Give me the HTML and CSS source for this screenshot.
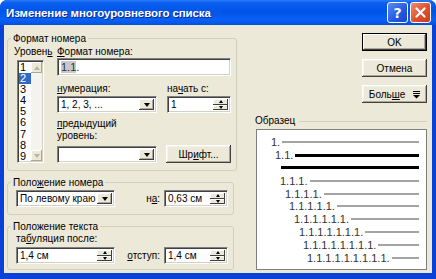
FILE: index.html
```html
<!DOCTYPE html>
<html lang="ru">
<head>
    <meta charset="UTF-8">
    <title>Изменение многоуровневого списка</title>
    <link rel="stylesheet" href="styles.css">
</head>
<body>

<div class="window">
    <!-- Заголовок окна -->
    <div class="titlebar">
        <span class="title">Изменение многоуровневого списка</span>
        <div class="caption-buttons">
            <span class="cap-btn help">?</span>
            <span class="cap-btn close">
                <svg width="11" height="11" viewBox="0 0 11 11"><path d="M1.5 1.5 L9.5 9.5 M9.5 1.5 L1.5 9.5" stroke="#fff" stroke-width="2.2" stroke-linecap="round"/></svg>
            </span>
        </div>
    </div>

    <div class="client">
        <div class="left">
            <fieldset class="group g-format">
                <legend>Формат номера</legend>
                <div class="format-row">
                    <div class="level-col">
                        <div class="lbl">Уровен<u>ь</u></div>
                        <div class="listbox">
                            <ul class="items">
                                <li>1</li>
                                <li class="sel">2</li>
                                <li>3</li>
                                <li>4</li>
                                <li>5</li>
                                <li>6</li>
                                <li>7</li>
                                <li>8</li>
                                <li>9</li>
                            </ul>
                            <div class="vscroll">
                                <span class="sb-btn"><i class="tri up dim"></i></span>
                                <span class="sb-btn"><i class="tri down dim"></i></span>
                            </div>
                        </div>
                    </div>
                    <div class="fmt-col">
                        <div class="lbl"><u>Ф</u>ормат номера:</div>
                        <div class="field fmt-input"><span class="shade">1.1</span>.</div>
                        <div class="pair">
                            <div class="cell">
                                <div class="lbl"><u>н</u>умерация:</div>
                                <div class="field combo w100">1, 2, 3, ...<span class="drop"><i class="tri down"></i></span></div>
                            </div>
                            <div class="cell">
                                <div class="lbl">на<u>ч</u>ать с:</div>
                                <div class="field spin w64">1<span class="spin-btns"><span class="sb"><i class="tri up sm"></i></span><span class="sb"><i class="tri down sm"></i></span></span></div>
                            </div>
                        </div>
                        <div class="pair prev-row">
                            <div class="cell">
                                <div class="lbl two"><u>п</u>редыдущий<br>уровень:</div>
                                <div class="field combo w100"><span class="drop"><i class="tri down"></i></span></div>
                            </div>
                            <button class="btn font-btn">Шр<u>и</u>фт...</button>
                        </div>
                    </div>
                </div>
            </fieldset>

            <fieldset class="group g-number">
                <legend>Поло<u>ж</u>ение номера</legend>
                <div class="row">
                    <div class="field combo w99">По левому краю<span class="drop"><i class="tri down"></i></span></div>
                    <span class="lbl inline na">н<u>а</u>:</span>
                    <div class="field spin w64">0,63 см<span class="spin-btns"><span class="sb"><i class="tri up sm"></i></span><span class="sb"><i class="tri down sm"></i></span></span></div>
                </div>
            </fieldset>

            <fieldset class="group g-text">
                <legend>Положение текста</legend>
                <div class="lbl tab-lbl">та<u>б</u>уляция после:</div>
                <div class="row">
                    <div class="field spin w99">1,4 см<span class="spin-btns"><span class="sb"><i class="tri up sm"></i></span><span class="sb"><i class="tri down sm"></i></span></span></div>
                    <span class="lbl inline"><u>о</u>тступ:</span>
                    <div class="field spin w64">1,4 см<span class="spin-btns"><span class="sb"><i class="tri up sm"></i></span><span class="sb"><i class="tri down sm"></i></span></span></div>
                </div>
            </fieldset>
        </div>

        <div class="right">
            <button class="btn default">OK</button>
            <button class="btn">Отмена</button>
            <button class="btn more-btn">Боль<u>ш</u>е
                <svg class="more" width="7" height="8" viewBox="0 0 7 8"><path d="M0 0.5 H7 M0 2.5 H7" stroke="#000" stroke-width="1"/><path d="M0 4 H7 L3.5 7.5 Z" fill="#000"/></svg>
            </button>

            <div class="sample-head"><span>Образец</span></div>
            <div class="sample">
                <div class="s-row" style="padding-left: 14px"><span>1.</span><i class="s-line"></i></div>
                <div class="s-row" style="padding-left: 18px"><span>1.1.</span><i class="s-line dark"></i></div>
                <div class="s-row" style="padding-left: 24px"><i class="s-line dark"></i></div>
                <div class="s-row" style="padding-left: 23px"><span>1.1.1.</span><i class="s-line"></i></div>
                <div class="s-row" style="padding-left: 28px"><span>1.1.1.1.</span><i class="s-line"></i></div>
                <div class="s-row" style="padding-left: 32px"><span>1.1.1.1.1.</span><i class="s-line"></i></div>
                <div class="s-row" style="padding-left: 37px"><span>1.1.1.1.1.1.</span><i class="s-line"></i></div>
                <div class="s-row" style="padding-left: 42px"><span>1.1.1.1.1.1.1.</span><i class="s-line"></i></div>
                <div class="s-row" style="padding-left: 46px"><span>1.1.1.1.1.1.1.1.</span><i class="s-line"></i></div>
                <div class="s-row" style="padding-left: 50px"><span>1.1.1.1.1.1.1.1.1.</span><i class="s-line"></i></div>
            </div>
        </div>
    </div>
</div>

</body>
</html>
```

FILE: styles.css
```css
/* Общие настройки */
body {
    margin: 0;
    background: #fff;
    font-family: 'Liberation Sans', Arial, sans-serif;
    font-size: 10px;
    color: #000;
}

u {
    text-decoration: underline;
    text-underline-offset: 1px;
}

/* Окно диалога */
.window {
    width: 436px;
    height: 279px;
    display: flex;
    flex-direction: column;
    background: #0842d8;
    border-radius: 7px 7px 0 0;
    overflow: hidden;
}

.titlebar {
    height: 25px;
    display: flex;
    align-items: center;
    justify-content: space-between;
    padding: 0 5px 0 6px;
    background: linear-gradient(#2a7cf8 0%, #0a5ef0 12%, #0055e8 45%, #0a60f5 80%, #0050e0 100%);
}

.title {
    color: #fff;
    font-family: 'Liberation Sans', Arial, sans-serif;
    font-weight: bold;
    font-size: 11.5px;
    letter-spacing: -0.1px;
    text-shadow: 1px 1px #0a2a90;
}

.caption-buttons {
    display: flex;
    gap: 2px;
}

.cap-btn {
    width: 19px;
    height: 19px;
    border: 1px solid #fff;
    border-radius: 3px;
    display: flex;
    align-items: center;
    justify-content: center;
    color: #fff;
    font-family: 'DejaVu Sans', sans-serif;
    font-weight: bold;
    font-size: 14px;
}

.help {
    background: linear-gradient(135deg, #5a8cf4, #2458e0 60%, #1848c8);
}

.close {
    background: linear-gradient(135deg, #f08a6a, #e0502c 55%, #c83c1c);
}

/* Клиентская область */
.client {
    flex: 1;
    margin: 0 4px 6px 4px;
    background: #ece9d8;
    display: flex;
    padding: 7px 5px 0 3px;
}

.left {
    width: 227px;
    display: flex;
    flex-direction: column;
}

.group {
    margin: 0;
    padding: 1px 5px 7px 8px;
    border: 1px solid #d0d0bf;
    border-radius: 3px;
}

.group legend {
    padding: 0 2px;
    margin-left: -5px;
    line-height: 13px;
}

.lbl {
    line-height: 12px;
}

.format-row {
    display: flex;
    gap: 2px;
}

.level-col {
    width: 41px;
    margin-left: -2px;
}

.level-col .lbl {
    white-space: nowrap;
}

.listbox {
    margin: 2px 0 0 3px;
    width: 27px;
    height: 103px;
    display: flex;
    background: #fff;
    box-sizing: border-box;
    border: 1px solid;
    border-color: #808080 #fff #fff #808080;
    box-shadow: inset 1px 1px #404040, inset -1px -1px #d4d0c8;
    padding: 1px;
}

.items {
    list-style: none;
    margin: 0;
    padding: 0;
    flex: 1;
}

.items li {
    height: 11.1px;
    line-height: 11px;
    padding-left: 1px;
    font-size: 11px;
}

.items li.sel {
    background: #316ac5;
    color: #fff;
}

.vscroll {
    width: 11px;
    background: #f4f3ee;
    display: flex;
    flex-direction: column;
    justify-content: space-between;
}

.sb-btn {
    height: 11px;
    background: #ece9d8;
    box-shadow: inset -1px -1px #aca899, inset 1px 1px #fff;
    display: flex;
    align-items: center;
    justify-content: center;
}

.fmt-col {
    flex: 1;
}

/* Поля ввода */
.field {
    height: 17px;
    box-sizing: border-box;
    background: #fff;
    border: 1px solid;
    border-color: #808080 #fff #fff #808080;
    box-shadow: inset 1px 1px #404040, inset -1px -1px #d4d0c8;
    display: flex;
    align-items: center;
    padding-left: 3px;
    position: relative;
    white-space: nowrap;
}

.fmt-input {
    width: 174px;
    height: 18px;
    font-size: 11px;
    color: #333;
}

.shade {
    background: #c8c8c8;
}

.w100 { width: 100px; }
.w99 { width: 99px; }
.w64 { width: 64px; }

.pair {
    display: flex;
    justify-content: space-between;
    margin-top: 7px;
}

.pair .lbl {
    margin-bottom: 1px;
}

.prev-row {
    align-items: flex-end;
    margin-top: 5px;
}

.prev-row .lbl {
    margin-bottom: 4px;
}

.drop {
    position: absolute;
    right: 2px;
    top: 2px;
    width: 15px;
    height: 11px;
    background: #ece9d8;
    box-shadow: inset -1px -1px #404040, inset 1px 1px #fff, inset -2px -2px #aca899;
    display: flex;
    align-items: center;
    justify-content: center;
}

.spin-btns {
    position: absolute;
    right: 2px;
    top: 2px;
    bottom: 2px;
    width: 15px;
    display: flex;
    flex-direction: column;
}

.sb {
    flex: 1;
    background: #ece9d8;
    box-shadow: inset -1px -1px #404040, inset 1px 1px #fff;
    display: flex;
    align-items: center;
    justify-content: center;
}

/* Треугольники стрелок */
.tri {
    width: 0;
    height: 0;
    border-left: 3.5px solid transparent;
    border-right: 3.5px solid transparent;
}

.tri.down {
    border-top: 4px solid #000;
}

.tri.up {
    border-bottom: 4px solid #000;
}

.tri.sm {
    border-left-width: 2.5px;
    border-right-width: 2.5px;
}

.tri.up.sm { border-bottom-width: 3px; }
.tri.down.sm { border-top-width: 3px; }

.tri.up.dim { border-bottom-color: #b8b4a4; }
.tri.down.dim { border-top-color: #b8b4a4; }

/* Кнопки */
.btn {
    font-family: 'Liberation Sans', Arial, sans-serif;
    font-size: 10px;
    color: #000;
    width: 65px;
    height: 18px;
    padding: 0;
    border: none;
    background: #ece9d8;
    box-shadow: inset -1px -1px #404040, inset 1px 1px #fff, inset -2px -2px #aca899, inset 2px 2px #f5f4ea;
}

.btn.default {
    border: 1px solid #000;
    box-shadow: inset -1px -1px #404040, inset 1px 1px #fff, inset -2px -2px #aca899;
}

.more {
    margin-left: 5px;
    vertical-align: -1px;
}

.g-number {
    margin-top: 5px;
    padding-top: 1px;
}

.row {
    display: flex;
    align-items: center;
}

.lbl.inline {
    flex: 1;
    text-align: right;
    padding-right: 4px;
}

.g-text {
    margin-top: 5px;
    padding-top: 0;
    padding-bottom: 5px;
}

.tab-lbl {
    margin-bottom: 2px;
}

/* Правая колонка */
.right {
    flex: 1;
    display: flex;
    flex-direction: column;
    align-items: flex-end;
    gap: 8px;
    padding-top: 1px;
}

.sample-head {
    align-self: stretch;
    margin: 4px 0 0 21px;
    display: flex;
    align-items: center;
    gap: 4px;
    line-height: 12px;
}

.sample-head::after {
    content: "";
    flex: 1;
    border-top: 1px solid #d0d0bf;
}

.sample {
    align-self: stretch;
    margin: -6px 0 0 22px;
    height: 141px;
    background: #fff;
    border: 1px solid #7f7f7f;
    box-sizing: border-box;
    padding: 6px 7px 0 0;
}

.s-row {
    height: 12.8px;
    display: flex;
    align-items: center;
    gap: 2px;
    color: #333;
    font-size: 11px;
}

.s-line {
    flex: 1;
    height: 2px;
    background: #a4a4a4;
}

.s-line.dark {
    height: 3px;
    background: #000;
}
```
